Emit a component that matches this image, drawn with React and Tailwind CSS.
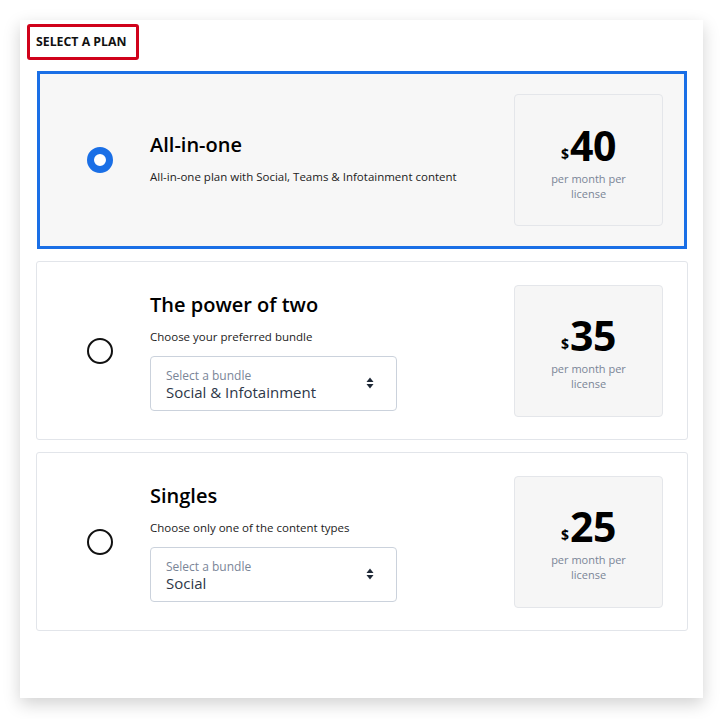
import React from 'react';

const plans = [
  {
    id: 'all',
    title: 'All-in-one',
    desc: 'All-in-one plan with Social, Teams & Infotainment content',
    price: 40,
    selected: true,
  },
  {
    id: 'two',
    title: 'The power of two',
    desc: 'Choose your preferred bundle',
    price: 35,
    bundle: 'Social & Infotainment',
  },
  {
    id: 'single',
    title: 'Singles',
    desc: 'Choose only one of the content types',
    price: 25,
    bundle: 'Social',
  },
];

function SortArrows() {
  return (
    <svg width="8" height="12" viewBox="0 0 8 12" className="text-[#1f2937]">
      <path d="M4 0.5 L7.5 5 H0.5 Z" fill="currentColor" />
      <path d="M4 11.5 L7.5 7 H0.5 Z" fill="currentColor" />
    </svg>
  );
}

function Radio({ checked }) {
  if (checked) {
    return <div className="w-[26px] h-[26px] rounded-full border-[7px] border-[#1a6fe6] bg-white" />;
  }
  return <div className="w-[26px] h-[26px] rounded-full border-2 border-[#111] bg-white" />;
}

function PlanCard({ plan }) {
  const sel = plan.selected;
  return (
    <div
      className={
        sel
          ? 'mx-px flex items-center h-[178px] border-[3px] border-[#1a6fe6] bg-[#f7f7f7] pr-[21px]'
          : 'flex items-center h-[179px] border border-[#e2e5ea] rounded-[3px] bg-white pr-[24px]'
      }
    >
      <div className={sel ? 'w-[110px] pl-[47px] flex' : 'w-[113px] pl-[50px] flex'}>
        <Radio checked={sel} />
      </div>
      <div className={sel ? 'flex-1 pb-[3px]' : 'flex-1'}>
        <h2 className="text-[20px] leading-[28px] font-semibold text-black">{plan.title}</h2>
        <p className="mt-[9px] text-[11.5px] leading-[18px] text-[#222]">{plan.desc}</p>
        {plan.bundle && (
          <div className="mt-[10px] w-[247px] h-[55px] border border-[#cbd2dc] rounded-[4px] bg-white flex items-start justify-between pl-[15px] pr-[22px] pt-[12px]">
            <div>
              <div className="text-[12px] leading-[14px] text-[#7a8597]">Select a bundle</div>
              <div className="text-[15px] leading-[18px] text-[#2d3748]">{plan.bundle}</div>
            </div>
            <div className="pt-[8px]">
              <SortArrows />
            </div>
          </div>
        )}
      </div>
      <div className="w-[149px] h-[132px] rounded-[4px] border border-[#e4e6ea] bg-[#f6f6f6] flex flex-col items-center justify-center pt-[4px]">
        <div className="flex items-end text-black font-bold">
          <span className="text-[14px] leading-[14px] mb-[5px] mr-[1px]">$</span>
          <span className="text-[41px] leading-[42px] tracking-[-0.5px]">{plan.price}</span>
        </div>
        <div className="mt-[5px] w-[90px] text-center text-[11px] leading-[15px] text-[#7a8597]">
          per month per license
        </div>
      </div>
    </div>
  );
}

export default function App() {
  return (
    <div className="min-h-screen bg-white p-[20px]" style={{ fontFamily: '"Open Sans", "Noto Sans", sans-serif' }}>
      <div className="w-[683px] h-[678px] bg-white shadow-[0_6px_16px_rgba(0,0,0,0.18)] pt-[4px] pl-[7px] pr-[15px]">
        <div className="inline-flex items-center h-[36px] pl-[6px] pr-[10px] border-[3px] border-[#d0021b] rounded-[3px]">
          <span className="text-[12.3px] font-bold text-[#111]">SELECT A PLAN</span>
        </div>
        <div className="mt-[11px] ml-[9px] flex flex-col gap-[12px]">
          {plans.map((p) => (
            <PlanCard key={p.id} plan={p} />
          ))}
        </div>
      </div>
    </div>
  );
}
